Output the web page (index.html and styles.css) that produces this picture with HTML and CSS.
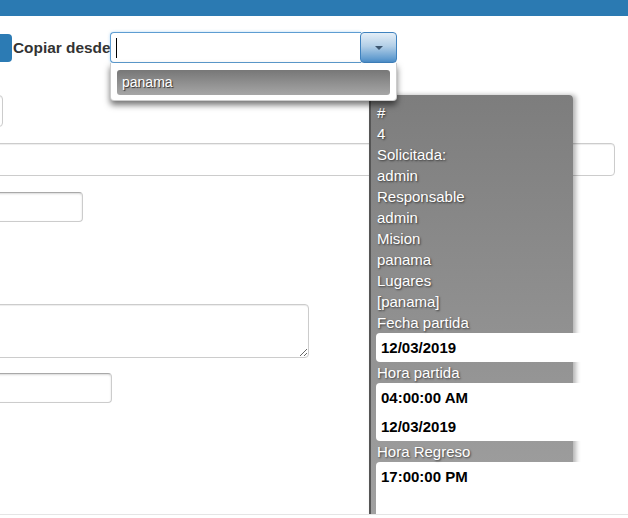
FILE: index.html
```html
<!DOCTYPE html>
<html>
<head>
<meta charset="utf-8">
<link rel="stylesheet" href="styles.css">
</head>
<body>
<div class="topbar"></div>
<div class="modal-body">
  <div class="copy-row">
    <span class="btn-stub"></span>
    <label class="copy-label">Copiar desde</label>
    <div class="combo">
      <div class="combo-input"><span class="text-cursor"></span></div>
      <div class="combo-btn"><span class="tri"></span></div>
    </div>
  </div>
  <div class="fields">
    <div class="ctrl c1"></div>
    <div class="ctrl c2"></div>
    <div class="ctrl c3 inset"></div>
    <textarea class="ta"></textarea>
    <div class="ctrl c4 inset"></div>
  </div>
  <div class="dropdown"><div class="dd-item">panama</div></div>
  <div class="tip">
    <div class="tl">#</div>
    <div class="tl">4</div>
    <div class="tl">Solicitada:</div>
    <div class="tl">admin</div>
    <div class="tl">Responsable</div>
    <div class="tl">admin</div>
    <div class="tl">Mision</div>
    <div class="tl">panama</div>
    <div class="tl">Lugares</div>
    <div class="tl">[panama]</div>
    <div class="tl">Fecha partida</div>
    <div class="vbox"><div class="val">12/03/2019</div></div>
    <div class="tl">Hora partida</div>
    <div class="vbox"><div class="val">04:00:00 AM</div><div class="val">12/03/2019</div></div>
    <div class="tl">Hora Regreso</div>
    <div class="vbox tall"><div class="val">17:00:00 PM</div></div>
  </div>
</div>
<div class="footer"></div>
</body>
</html>
```

FILE: styles.css
```css
html, body {
  margin: 0;
  padding: 0;
  background: #fff;
  overflow: hidden;
  font-family: "Liberation Sans", Arial, sans-serif;
}

.topbar {
  height: 16px;
  background: #2b7ab2;
}

.modal-body {
  position: relative;
  height: 498px;
  overflow: hidden;
}

.copy-row {
  display: flex;
  align-items: center;
  padding-top: 16px;
}

.btn-stub {
  display: block;
  width: 12px;
  height: 28px;
  background: #2c7bb4;
  border-radius: 0 4px 4px 0;
}

.copy-label {
  display: block;
  width: 97px;
  margin-left: 1px;
  font-weight: bold;
  font-size: 15.4px;
  color: #333;
  white-space: nowrap;
}

.combo {
  display: flex;
  width: 287px;
  height: 31px;
}

.combo-input {
  flex: 1;
  box-sizing: border-box;
  border: 1px solid #5e9dd2;
  border-right: none;
  border-radius: 4px 0 0 4px;
  background: #fff;
  box-shadow: 0 0 3px rgba(102, 175, 233, 0.5);
  display: flex;
  align-items: center;
  padding-left: 5px;
}

.text-cursor {
  display: block;
  width: 1px;
  height: 20px;
  background: #000;
}

.combo-btn {
  width: 37px;
  box-sizing: border-box;
  border: 1px solid #3f82bf;
  border-radius: 4px;
  margin-left: -1px;
  background: linear-gradient(#e4eef7, #b3cfe7 45%, #4d8fc9);
  display: flex;
  align-items: center;
  justify-content: center;
}

.tri {
  width: 0;
  height: 0;
  border-left: 4px solid transparent;
  border-right: 4px solid transparent;
  border-top: 4px solid #3d5670;
}

.fields {
  display: flex;
  flex-direction: column;
  align-items: flex-start;
  margin-top: 32px;
}

.ctrl {
  box-sizing: border-box;
  border: 1px solid #ccc;
  border-radius: 4px;
  background: #fff;
  box-shadow: inset 0 1px 1px rgba(0, 0, 0, 0.075);
}

.ctrl.inset {
  border-top-color: #a9a9a9;
  box-shadow: inset 0 1px 2px rgba(0, 0, 0, 0.15);
}

.c1 { width: 200px; height: 32px; margin-left: -197px; }
.c2 { width: 665px; height: 33px; margin-left: -50px; margin-top: 16px; }
.c3 { width: 200px; height: 30px; margin-left: -117px; margin-top: 16px; }

.ta {
  display: block;
  box-sizing: border-box;
  width: 400px;
  height: 54px;
  margin: 82px 0 0 -91px;
  border: 1px solid #ccc;
  border-radius: 4px;
  background: #fff;
  box-shadow: inset 0 1px 1px rgba(0, 0, 0, 0.075);
  padding: 0;
}

.c4 { width: 200px; height: 30px; margin-left: -88px; margin-top: 15px; }

.dropdown {
  position: absolute;
  left: 110px;
  top: 47px;
  width: 287px;
  height: 38px;
  box-sizing: border-box;
  background: #fff;
  border: 1px solid rgba(0, 0, 0, 0.2);
  border-top: none;
  border-radius: 0 0 4px 4px;
  box-shadow: 0 4px 6px rgba(0, 0, 0, 0.55);
  padding: 7px 6px 0 6px;
  z-index: 3;
}

.dd-item {
  height: 25px;
  line-height: 25px;
  border-radius: 3px;
  background: linear-gradient(#777, #a6a6a6);
  color: #fff;
  font-size: 14px;
  padding-left: 5px;
  text-shadow: 1px 1px 1px rgba(0, 0, 0, 0.7);
}

.tip {
  position: absolute;
  left: 369px;
  top: 79px;
  width: 204px;
  height: 440px;
  box-sizing: border-box;
  border-left: 2px solid #555;
  border-radius: 0 4px 0 0;
  background: linear-gradient(#7d7d7d, #a2a2a2);
  box-shadow: 3px 0 5px rgba(0, 0, 0, 0.3);
  padding: 7px 0 0 6px;
  color: #fff;
  font-size: 15px;
  z-index: 2;
}

.tl {
  line-height: 21px;
  height: 21px;
  white-space: nowrap;
  text-shadow: 1px 1px 2px rgba(0, 0, 0, 0.6);
}

.vbox {
  margin-left: -1px;
  width: 260px;
  background: #fff;
  border-radius: 4px 0 0 4px;
  color: #000;
  font-weight: bold;
}

.vbox.tall {
  height: 80px;
}

.val {
  height: 29px;
  line-height: 29px;
  padding-left: 5px;
  white-space: nowrap;
}

.footer {
  border-top: 1px solid #e5e5e5;
  height: 3px;
  background: #fff;
}
```
